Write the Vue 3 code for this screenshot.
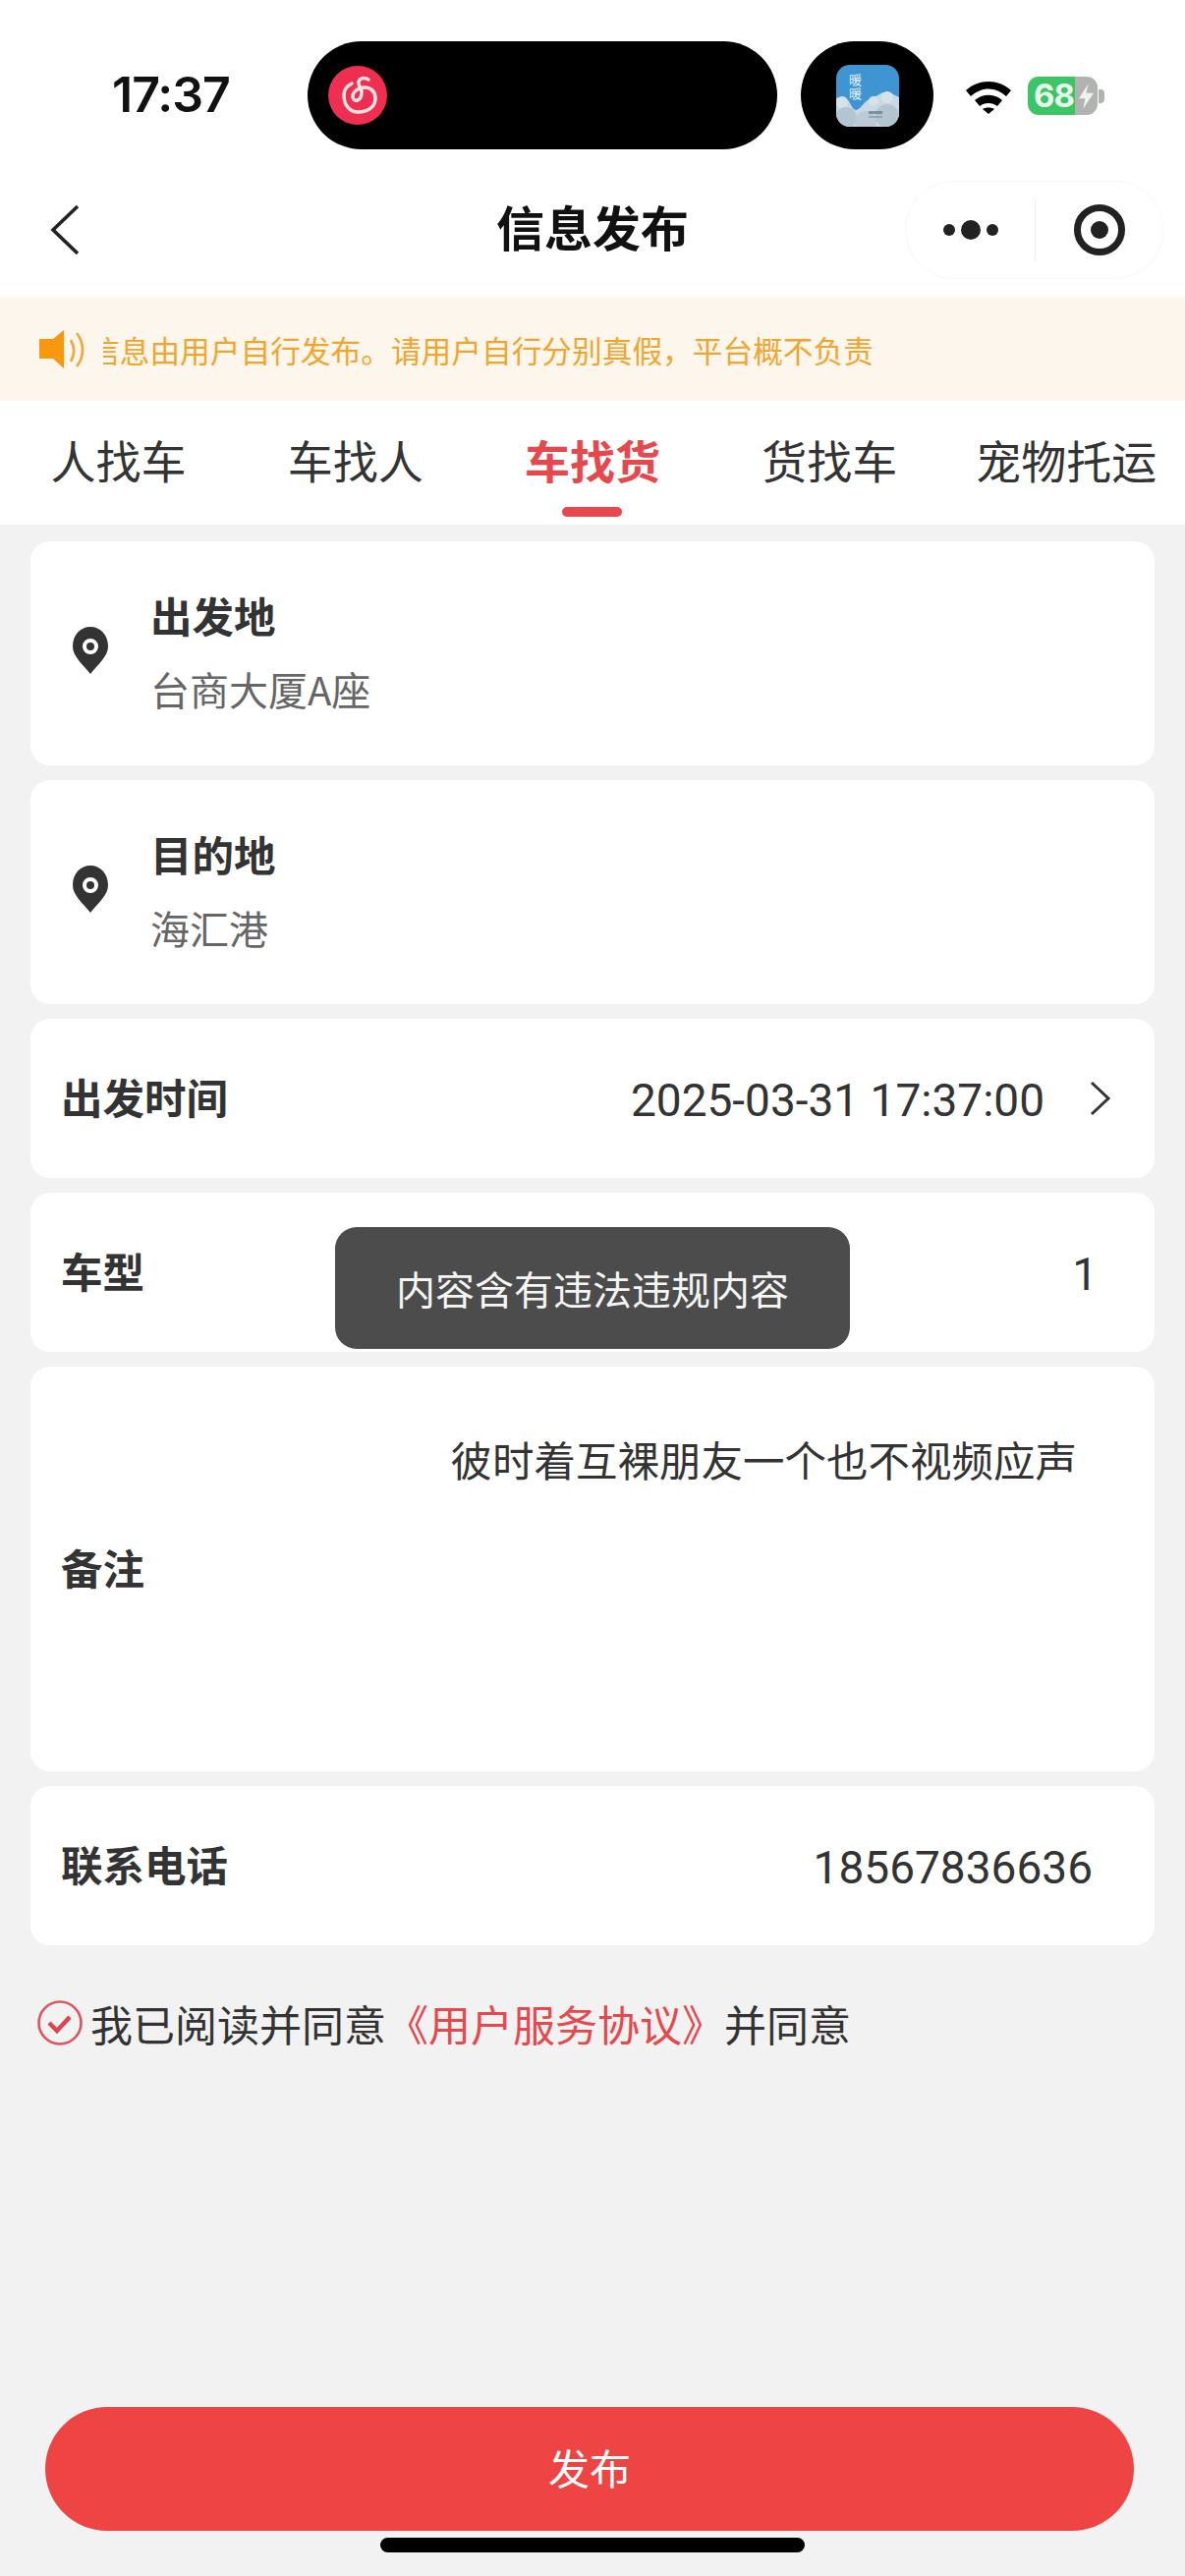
<script setup>
const tabs = ['人找车', '车找人', '车找货', '货找车', '宠物托运']
const activeTab = 2
</script>

<template>
  <div class="page">
    <!-- status bar -->
    <div class="status">
      <span class="clock">17:37</span>
      <div class="island">
        <svg class="music" viewBox="0 0 60 60" width="60" height="60">
          <circle cx="30" cy="30" r="30" fill="#ee2f51" />
          <path d="M24 18C18 21 16 25 16 30C16 41 23 48 32 47C42 46 48 41 48 33C48 26 43 22 37 22C30 22 25 27 25 31C25 34 27 36 30 35C33 34 34 31 34 26C33 22 30 19 31 16C32 13 36 11 41 14" fill="none" stroke="#fde4e0" stroke-width="3.5" stroke-linecap="round" />
        </svg>
      </div>
      <div class="island-small">
        <svg class="weather" viewBox="0 0 64 63" width="64" height="63">
          <defs>
            <clipPath id="wclip"><rect width="64" height="63" rx="14" /></clipPath>
          </defs>
          <g clip-path="url(#wclip)">
            <rect width="64" height="63" fill="#3f95d2" />
            <path d="M0 34C4 32 9 33 12 36C15 39 16 45 20 46C24 46 27 39 32 36C36 33 40 33 44 30C48 27 54 27 58 30C60 31 62 32 64 33V63H0z" fill="#c9d8e2" />
            <circle cx="6" cy="38" r="6" fill="#d6e2ea" />
            <circle cx="38" cy="37" r="5" fill="#d6e2ea" />
            <circle cx="52" cy="33" r="6" fill="#d6e2ea" />
            <circle cx="10" cy="54" r="11" fill="#b4c5d2" />
            <circle cx="30" cy="58" r="11" fill="#bccbd7" />
            <circle cx="52" cy="52" r="12" fill="#b4c5d2" />
            <rect x="33" y="47" width="14" height="3" fill="#5f7686" opacity="0.7" />
            <rect x="33" y="52" width="14" height="2" fill="#5f7686" opacity="0.4" />
          </g>
          <text x="13" y="20" class="weather-text">暖</text>
          <text x="13" y="34" class="weather-text">暖</text>
        </svg>
      </div>
      <svg class="wifi" viewBox="0 0 48 36" width="48" height="36">
        <path d="M1 12C14 0 34 0 47 12l-5 6C31 8 17 8 6 18z" />
        <path d="M10 22c8-7 20-7 28 0l-5 6c-5-4-13-4-18 0z" />
        <path d="M18 31c3-2 9-2 12 0l-6 5z" />
      </svg>
      <div class="battery">
        <div class="battery-body">
          <span class="battery-level">68</span>
          <svg class="bolt" viewBox="0 0 14 24" width="15" height="28">
            <path d="M9 0 0 14h6l-2 10 10-15H7z" fill="#eef2ee" />
          </svg>
        </div>
        <span class="battery-tip"></span>
      </div>
    </div>

    <!-- nav bar -->
    <div class="nav">
      <svg class="back" viewBox="0 0 30 52" width="30" height="52">
        <path d="M28 2 3 26l25 24" fill="none" stroke="#222" stroke-width="3.6" />
      </svg>
      <div class="title">信息发布</div>
      <div class="capsule">
        <div class="capsule-dots">
          <i class="dot"></i><i class="dot big"></i><i class="dot"></i>
        </div>
        <div class="capsule-line"></div>
        <div class="capsule-target"><i></i></div>
      </div>
    </div>

    <!-- notice -->
    <div class="notice">
      <svg class="speaker" viewBox="0 0 47 39" width="47" height="39">
        <path d="M0 9h14L25 0v39L14 29H0z" fill="#f7980f" />
        <path d="M32 10c4 7 4 15 0 22M38 3c8 10 8 24 0 34" fill="none" stroke="#f0a63a" stroke-width="2.6" />
      </svg>
      <div class="notice-clip">
        <span class="notice-text">信息由用户自行发布。请用户自行分别真假，平台概不负责</span>
      </div>
    </div>

    <!-- tabs -->
    <div class="tabs">
      <div v-for="(tab, i) in tabs" :key="tab" class="tab" :class="{ active: i === activeTab }">
        {{ tab }}
      </div>
    </div>

    <!-- form -->
    <div class="form">
      <div class="card place">
        <svg class="pin" viewBox="0 0 36 48" width="36" height="48">
          <path fill-rule="evenodd" d="M18 0C8 0 0 8 0 20C0 30 10 38 18 48C26 38 36 30 36 20C36 8 28 0 18 0zM18 12a8 8 0 1 1 0 16a8 8 0 0 1 0-16zM18 16a4 4 0 1 0 0 8a4 4 0 0 0 0-8z" fill="#333" />
        </svg>
        <div class="place-text">
          <div class="place-name">出发地</div>
          <div class="place-addr">台商大厦A座</div>
        </div>
      </div>

      <div class="card place">
        <svg class="pin" viewBox="0 0 36 48" width="36" height="48">
          <path fill-rule="evenodd" d="M18 0C8 0 0 8 0 20C0 30 10 38 18 48C26 38 36 30 36 20C36 8 28 0 18 0zM18 12a8 8 0 1 1 0 16a8 8 0 0 1 0-16zM18 16a4 4 0 1 0 0 8a4 4 0 0 0 0-8z" fill="#333" />
        </svg>
        <div class="place-text">
          <div class="place-name">目的地</div>
          <div class="place-addr">海汇港</div>
        </div>
      </div>

      <div class="card row">
        <span class="label">出发时间</span>
        <span class="value date">2025-03-31 17:37:00</span>
        <svg class="chevron" viewBox="0 0 22 36" width="22" height="36">
          <path d="M2 2l17 16L2 34" fill="none" stroke="#333" stroke-width="3" />
        </svg>
      </div>

      <div class="card row">
        <span class="label">车型</span>
        <span class="value single">1</span>
      </div>

      <div class="card remark">
        <span class="label">备注</span>
        <span class="value remark-text">彼时着互裸朋友一个也不视频应声</span>
      </div>

      <div class="card row">
        <span class="label">联系电话</span>
        <span class="value phone">18567836636</span>
      </div>

      <div class="agree">
        <svg class="check" viewBox="0 0 46 46" width="46" height="46">
          <circle cx="23" cy="23" r="21.5" fill="none" stroke="#dc5560" stroke-width="2.6" />
          <path d="M12 23l8 8 13-14" fill="none" stroke="#dc4450" stroke-width="4.5" />
        </svg>
        <span>我已阅读并同意</span><span class="link">《用户服务协议》</span><span>并同意</span>
      </div>
    </div>

    <!-- bottom -->
    <div class="submit">发布</div>
    <div class="home-bar"></div>

    <div class="toast">内容含有违法违规内容</div>
  </div>
</template>

<style scoped>
.page {
  position: relative;
  height: 2622px;
  display: flex;
  flex-direction: column;
  background: #f2f2f2;
  font-family: "Noto Sans CJK SC", "Noto Sans", sans-serif;
  color: #333;
  overflow: hidden;
}

.status {
  height: 152px;
  padding-top: 42px;
  box-sizing: border-box;
  display: flex;
  align-items: flex-start;
  background: #fff;
}

.clock {
  width: 313px;
  height: 110px;
  line-height: 108px;
  text-align: center;
  padding-left: 35px;
  box-sizing: border-box;
  font-family: Inter, sans-serif;
  font-size: 50px;
  font-weight: 600;
  letter-spacing: -1px;
  color: #111;
}

.island {
  width: 478px;
  height: 110px;
  border-radius: 55px;
  background: #000;
  display: flex;
  align-items: center;
  padding-left: 21px;
  box-sizing: border-box;
}

.island-small {
  width: 135px;
  height: 110px;
  margin-left: 24px;
  border-radius: 55px;
  background: #000;
  display: flex;
  align-items: center;
  justify-content: center;
}

.weather-text {
  font-size: 13px;
  fill: #e6f1f8;
}

.wifi {
  margin: 38px 0 0 32px;
  fill: #000;
}

.battery {
  margin: 36px 0 0 16px;
  display: flex;
  align-items: center;
}

.battery-body {
  width: 71px;
  height: 39px;
  border-radius: 11px;
  background: linear-gradient(90deg, #3cc465 0 67%, #b1b3b1 67% 100%);
  display: flex;
  align-items: center;
  padding-left: 6px;
  box-sizing: border-box;
}

.battery-level {
  font-family: Inter, sans-serif;
  font-size: 33px;
  font-weight: 700;
  line-height: 39px;
  letter-spacing: -1px;
  color: #e9f8ec;
}

.bolt {
  margin-left: 5px;
  flex: none;
}

.battery-tip {
  width: 6px;
  height: 14px;
  margin-left: 1px;
  border-radius: 0 4px 4px 0;
  background: #b1b3b1;
}

.nav {
  position: relative;
  height: 150px;
  display: flex;
  align-items: center;
  justify-content: center;
  background: #fff;
}

.back {
  position: absolute;
  left: 51px;
  top: 56px;
}

.title {
  margin-top: 4px;
  font-size: 49px;
  font-weight: 700;
  color: #111;
}

.capsule {
  position: absolute;
  left: 922px;
  top: 33px;
  width: 261px;
  height: 98px;
  border-radius: 49px;
  box-shadow: 0 0 0 1px #f8f8f8;
  display: flex;
  align-items: center;
}

.capsule-dots {
  width: 131px;
  display: flex;
  align-items: center;
  justify-content: center;
  gap: 6px;
}

.dot {
  width: 12px;
  height: 12px;
  border-radius: 50%;
  background: #222;
}

.dot.big {
  width: 20px;
  height: 20px;
}

.capsule-line {
  width: 1px;
  height: 63px;
  background: #eee;
}

.capsule-target {
  flex: 1;
  display: flex;
  align-items: center;
  justify-content: center;
}

.capsule-target i {
  width: 52px;
  height: 52px;
  border: 7px solid #222;
  border-radius: 50%;
  box-sizing: border-box;
  display: flex;
  align-items: center;
  justify-content: center;
}

.capsule-target i::after {
  content: "";
  width: 18px;
  height: 18px;
  border-radius: 50%;
  background: #222;
}

.notice {
  height: 106px;
  display: flex;
  align-items: center;
  padding-left: 40px;
  background: #fdf6ec;
}

.speaker {
  flex: none;
}

.notice-clip {
  width: 790px;
  margin-left: 18px;
  overflow: hidden;
  white-space: nowrap;
}

.notice-text {
  display: inline-block;
  margin-left: -14px;
  font-size: 30.7px;
  color: #f0a52f;
}

.tabs {
  height: 126px;
  display: grid;
  grid-template-columns: repeat(5, 241.2px);
  background: #fff;
}

.tab {
  position: relative;
  padding-top: 27px;
  text-align: center;
  font-size: 46px;
  line-height: 64px;
  color: #333;
  white-space: nowrap;
}

.tab.active {
  color: #e5484d;
  font-weight: 700;
}

.tab.active::after {
  content: "";
  position: absolute;
  left: 90px;
  bottom: 8px;
  width: 61px;
  height: 10px;
  border-radius: 5px;
  background: #e5484d;
}

.form {
  display: flex;
  flex-direction: column;
  gap: 15px;
  padding: 17px 31px 0;
}

.card {
  background: #fff;
  border-radius: 20px;
}

.place {
  height: 228px;
  display: flex;
  align-items: center;
  padding-left: 43px;
  box-sizing: border-box;
}

.pin {
  flex: none;
  margin-bottom: 6px;
}

.place-text {
  margin-left: 43px;
  margin-bottom: 4px;
}

.place-name {
  font-size: 42.5px;
  font-weight: 700;
  line-height: 60px;
}

.place-addr {
  margin-top: 15px;
  font-size: 40px;
  line-height: 60px;
  color: #666;
}

.row {
  height: 162px;
  display: flex;
  align-items: center;
  padding: 0 32px 0 31px;
  box-sizing: border-box;
}

.label {
  flex: none;
  margin-bottom: 5px;
  font-size: 42.5px;
  font-weight: 700;
  color: #333;
}

.value {
  margin-top: 3px;
  font-family: Roboto, "Noto Sans CJK SC", sans-serif;
  font-size: 46px;
  color: #333;
}

.date {
  margin-left: auto;
}

.chevron {
  margin-left: 46px;
  margin-right: 12px;
}

.single {
  margin-left: auto;
  margin-right: 26px;
}

.phone {
  margin-left: auto;
  margin-right: 31px;
}

.remark {
  position: relative;
  height: 412px;
  display: flex;
  align-items: center;
  padding: 0 32px 0 31px;
  box-sizing: border-box;
}

.remark-text {
  position: absolute;
  top: 60px;
  right: 79px;
  font-size: 42.5px;
  font-family: "Noto Sans CJK SC", sans-serif;
}

.agree {
  margin-top: 33px;
  display: flex;
  align-items: center;
  padding-left: 7px;
  font-size: 43px;
  color: #333;
}

.check {
  flex: none;
  margin-right: 8px;
}

.link {
  color: #e5484d;
}

.submit {
  margin: auto 52px 0 46px;
  height: 126px;
  padding-bottom: 6px;
  box-sizing: border-box;
  border-radius: 63px;
  background: #ef4444;
  color: #fff;
  display: flex;
  align-items: center;
  justify-content: center;
  font-size: 42px;
}

.home-bar {
  width: 432px;
  height: 15px;
  margin: 7px auto 24px;
  border-radius: 8px;
  background: #000;
}

.toast {
  position: absolute;
  left: 341px;
  top: 1249px;
  width: 524px;
  height: 124px;
  border-radius: 22px;
  background: #4c4c4c;
  color: #f5f5f5;
  font-size: 40px;
  display: flex;
  align-items: center;
  justify-content: center;
}
</style>

<style>
html, body {
  margin: 0;
  background: #f2f2f2;
}
</style>
